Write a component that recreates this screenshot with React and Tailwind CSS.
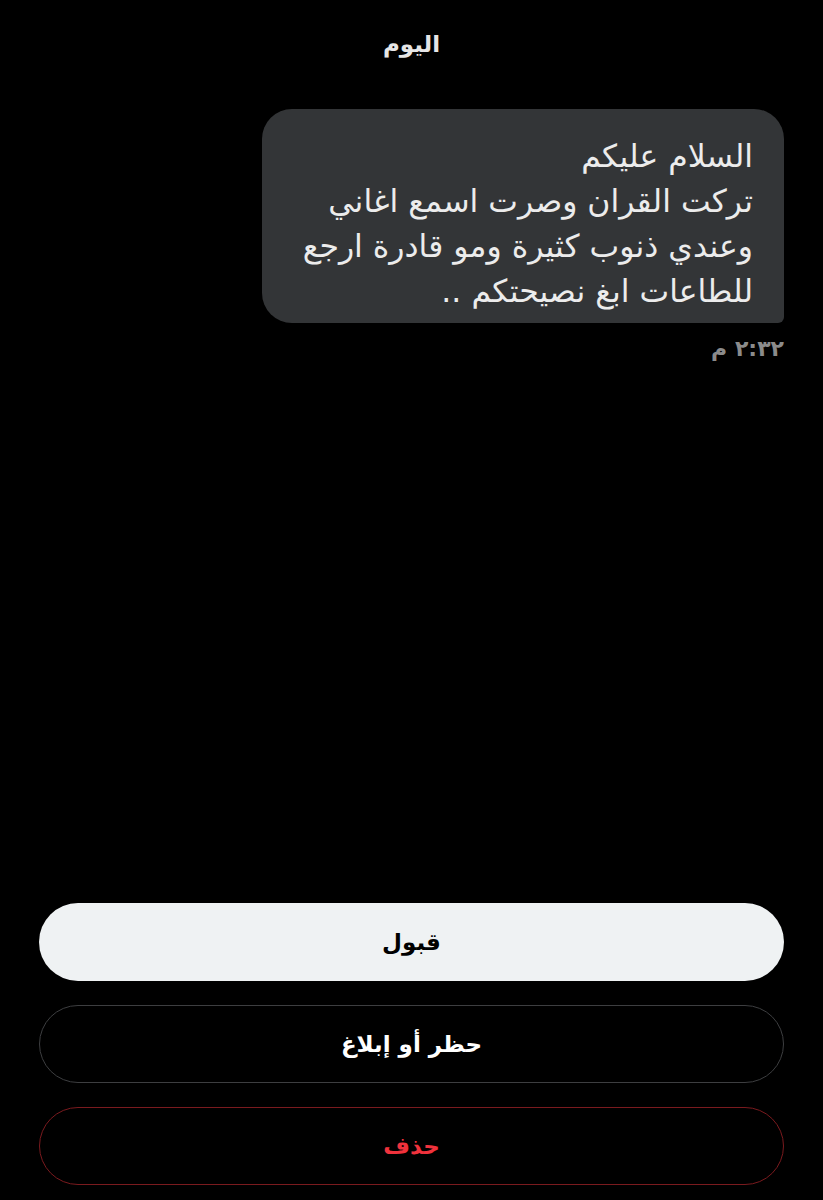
export default function App() {
  return (
    <div dir="rtl" className="bg-black w-[823px] h-[1200px] flex flex-col px-[39px] text-white" style={{ fontFamily: '"DejaVu Sans", "Noto Sans", sans-serif' }}>
      <div className="h-[92px] flex items-center justify-center pb-[4px]">
        <span className="text-[23px] font-bold text-[#e6e6e6]">اليوم</span>
      </div>
      <div className="mt-[17px] flex flex-col items-start">
        <div className="w-[522px] h-[214px] bg-[#333537] rounded-[30px] rounded-br-[6px] pr-[31px] pl-[16px] pt-[25px] text-[31.5px] leading-[45px] text-[#ececec] text-right whitespace-nowrap">
          <div>السلام عليكم</div>
          <div>تركت القران وصرت اسمع اغاني</div>
          <div>وعندي ذنوب كثيرة ومو قادرة ارجع</div>
          <div>للطاعات ابغ نصيحتكم ..</div>
        </div>
        <div className="mt-[9px] text-[22px] text-[#8b8b8b] font-bold">٢:٣٢ م</div>
      </div>
      <div className="flex-1" />
      <div className="flex flex-col gap-[24px] pb-[15px]">
        <button className="h-[78px] w-full rounded-full bg-[#eff2f3] text-black text-[23px] font-bold flex items-center justify-center">قبول</button>
        <button className="h-[78px] w-full rounded-full border-[1.5px] border-[#3d3e40] text-white text-[23px] font-bold flex items-center justify-center">حظر أو إبلاغ</button>
        <button className="h-[78px] w-full rounded-full border-[1.5px] border-[#7a1a1e] text-[#f0323c] text-[23px] font-bold flex items-center justify-center">حذف</button>
      </div>
    </div>
  );
}
